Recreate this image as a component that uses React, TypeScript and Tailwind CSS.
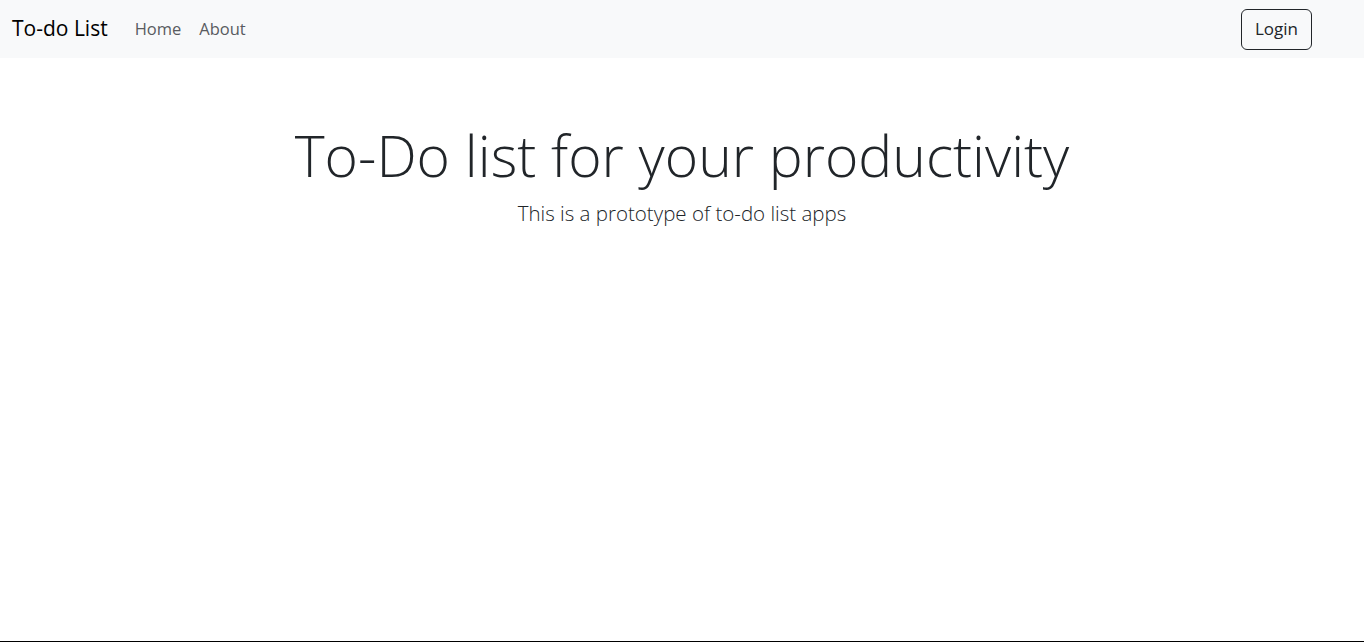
function App() {
  return (
    <div className="h-[642px] bg-white border-b border-black font-['Open_Sans',sans-serif] text-[#212529]">
      {/* Navbar */}
      <nav className="h-[58px] bg-[#f8f9fa] flex items-center pl-3 pr-[52px]">
        <a className="text-[21px] text-black mr-[27px]">To-do List</a>
        <div className="flex gap-[18px] text-[16.5px] text-[#595b60]">
          <a>Home</a>
          <a>About</a>
        </div>
        <div className="ml-auto">
          <button className="h-[41px] w-[71px] border border-[#212529] rounded-[6px] text-[17px] text-[#212529]">
            Login
          </button>
        </div>
      </nav>

      {/* Hero */}
      <div className="text-center pt-[63px]">
        <h1 className="text-[57px] font-light leading-[1.2]">To-Do list for your productivity</h1>
        <p className="mt-[9px] text-[20.5px] font-light leading-[1.5] text-[#212529]">This is a prototype of to-do list apps</p>
      </div>
    </div>
  );
}

export default App;
